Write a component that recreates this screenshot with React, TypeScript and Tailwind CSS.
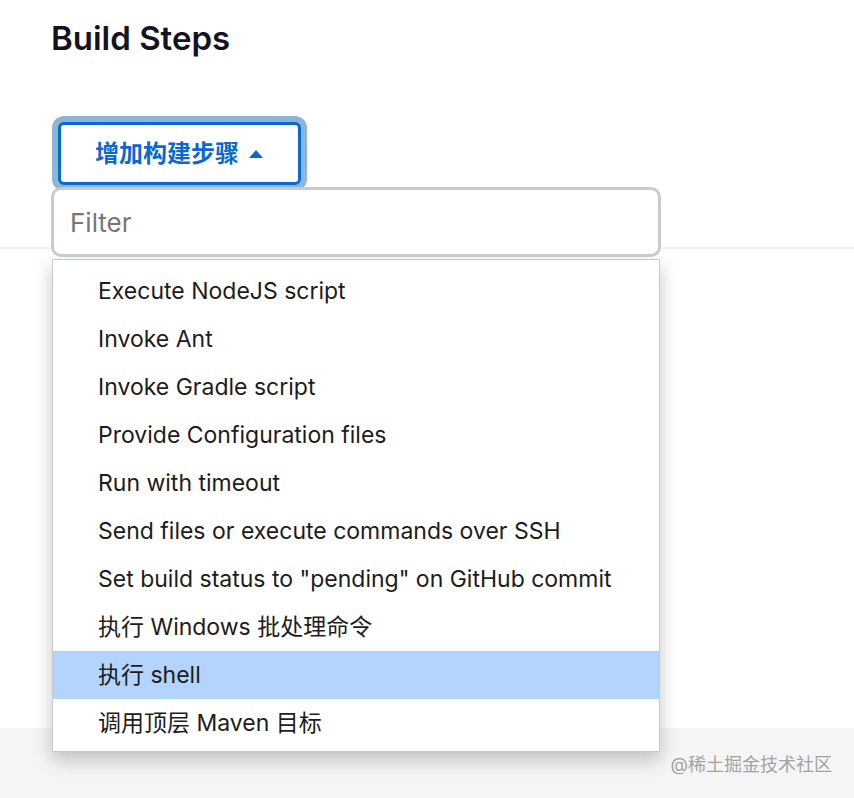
import React from "react";

const items = [
	"Execute NodeJS script",
	"Invoke Ant",
	"Invoke Gradle script",
	"Provide Configuration files",
	"Run with timeout",
	"Send files or execute commands over SSH",
	'Set build status to "pending" on GitHub commit',
	"执行 Windows 批处理命令",
	"执行 shell",
	"调用顶层 Maven 目标",
];

const font = "font-['Inter','Noto_Sans_CJK_SC',sans-serif]";

export default function App() {
	const active = "执行 shell";

	return (
		<div className={`flex h-[798px] w-full flex-col overflow-hidden bg-white ${font}`}>
			<h2 className="pl-[51px] pt-[18px] text-[33px] font-semibold leading-[40px] text-[#14141f]">
				Build Steps
			</h2>

			{/* 増加ボタン + ドロップダウン */}
			<div className="relative ml-[58px] mt-[64px] w-[243px]">
				<button
					type="button"
					className="flex h-[63px] w-[243px] items-center rounded-[6px] border-[3px] border-[#0b68d0] bg-white pl-[34px] text-[24px] font-bold text-[#0b68d0] shadow-[0_0_0_6px_#8cb6d6]"
				>
					<span className="leading-none">增加构建步骤</span>
					<span className="ml-[10px] h-0 w-0 border-x-[7px] border-b-[8px] border-x-transparent border-b-[#0b68d0]" />
				</button>

				<div className="absolute left-[-7px] top-[65px] z-10 w-[610px]">
					<input
						type="text"
						placeholder="Filter"
						className="h-[70px] w-full rounded-[10px] border-[3px] border-[#c5cccb] bg-white px-[16px] text-[26px] text-[#222] outline-none placeholder:text-[#767676]"
					/>
					<ul className="ml-[1px] mt-[2px] w-[608px] border border-[#c9c9c9] bg-white pb-[4px] pt-[7px] shadow-[0_8px_18px_rgba(0,0,0,0.22)]">
						{items.map((item) => (
							<li
								key={item}
								className={`flex h-[48px] items-center pl-[45px] text-[23px] text-[#1c1c1c] ${
									item === active ? "bg-[#b3d4fc]" : ""
								}`}
							>
								{item}
							</li>
						))}
					</ul>
				</div>
			</div>

			<div className="mt-[62px] border-t-2 border-[#efefef]" />

			<footer className="mt-auto flex h-[70px] items-start justify-end bg-[#f5f5f5] pr-[22px] pt-[26px]">
				<span className="text-[18px] leading-[22px] text-[#a3a3a3]">@稀土掘金技术社区</span>
			</footer>
		</div>
	);
}
